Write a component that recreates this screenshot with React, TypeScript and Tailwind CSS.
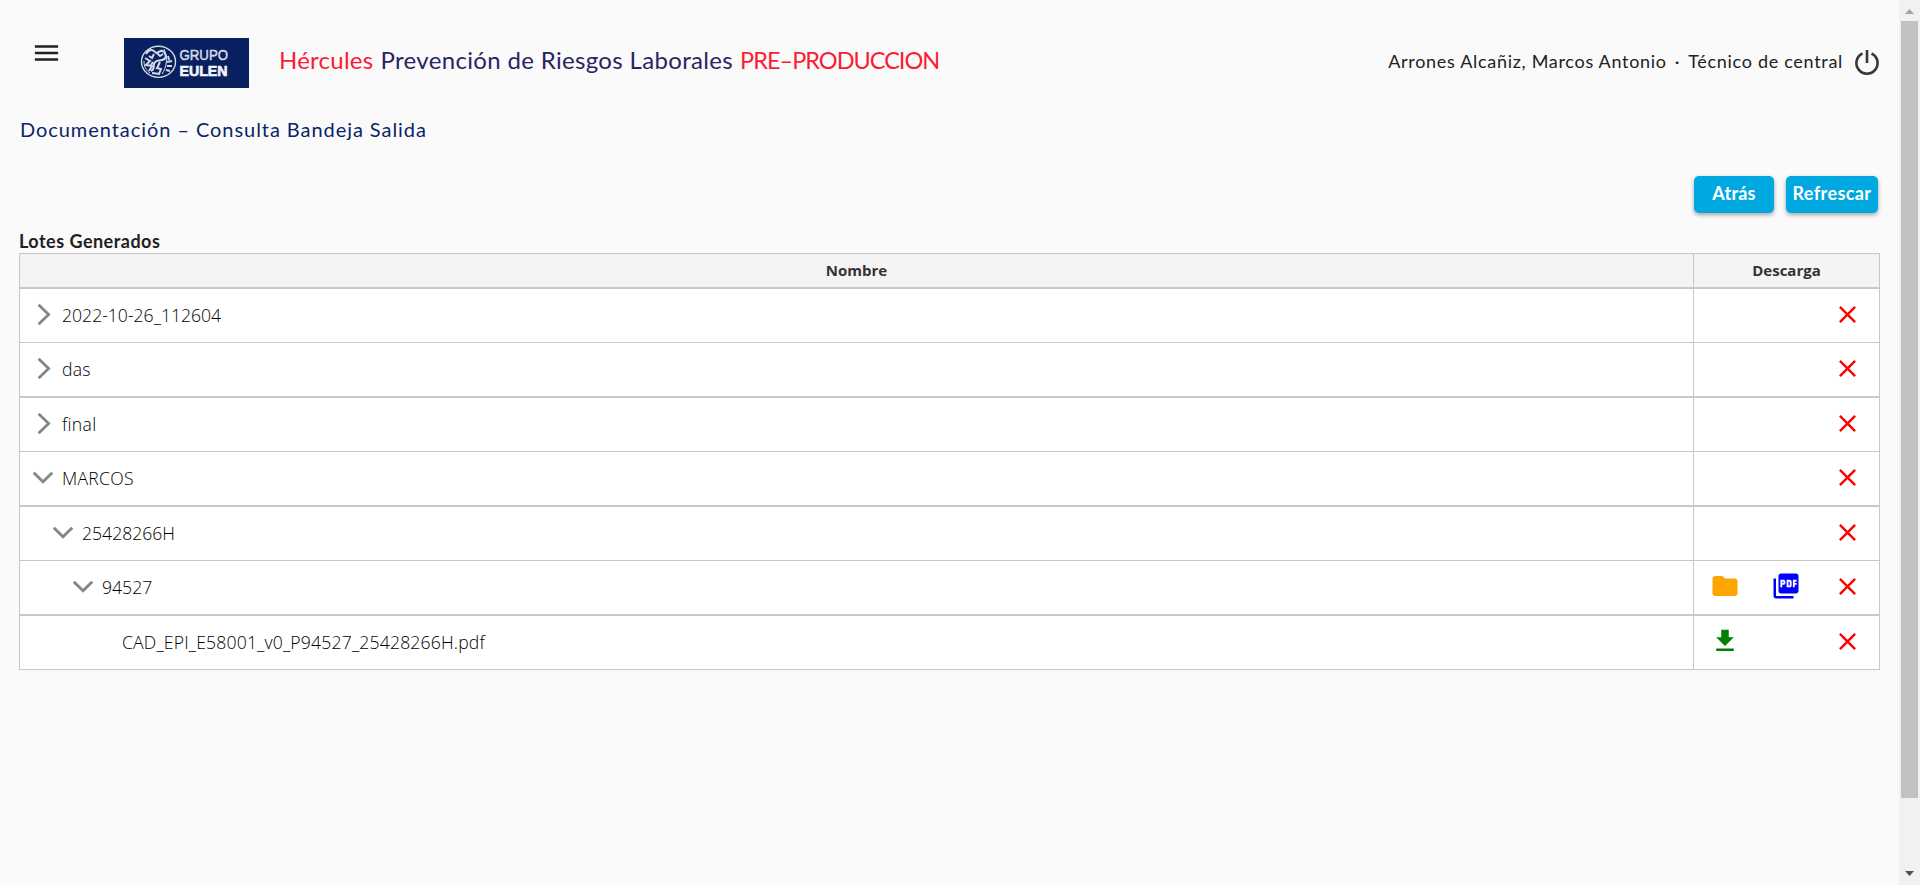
import { MdClose, MdFileDownload, MdFolder, MdMenu, MdPictureAsPdf } from "react-icons/md";

type Row = {
  name: string;
  indent: string;
  tracking?: string;
  state: "closed" | "open" | "leaf";
  folder?: boolean;
  pdf?: boolean;
  download?: boolean;
};

const rows: Row[] = [
  { name: "2022-10-26_112604", indent: "pl-[13px]", state: "closed" },
  { name: "das", indent: "pl-[13px]", tracking: "tracking-[0.2px]", state: "closed" },
  { name: "final", indent: "pl-[13px]", tracking: "tracking-[0.3px]", state: "closed" },
  { name: "MARCOS", indent: "pl-[13px]", tracking: "tracking-[0.3px]", state: "open" },
  { name: "25428266H", indent: "pl-[33px]", state: "open" },
  { name: "94527", indent: "pl-[53px]", state: "open", folder: true, pdf: true },
  { name: "CAD_EPI_E58001_v0_P94527_25428266H.pdf", indent: "pl-[73px]", tracking: "tracking-[0.17px]", state: "leaf", download: true },
];

function Chevron({ state }: { state: Row["state"] }) {
  return (
    <svg viewBox="0 0 20 53" className="h-[53px] w-5 shrink-0" fill="none" stroke="#868686" strokeWidth="2.8">
      {state === "closed" && <path d="M5.600 15.800 15.600 25.500 5.600 35.200" />}
      {state === "open" && <path d="M.8 20.800 10 29.800 19.200 20.800" />}
    </svg>
  );
}

function Logo() {
  return (
    <svg viewBox="0 0 125 50" className="h-[50px] w-[125px] shrink-0">
      <rect width="125" height="50" fill="#08205f" />
      <g fill="none" stroke="#d4d9e6">
        <ellipse cx="34.5" cy="23.8" rx="17" ry="15.6" strokeWidth="1.4" />
        <path strokeWidth="2" d="M22 16c3-5 7-5 9-2s6-4 9 0 2 7-2 8-7 0-8 4 1 5-3 7M21 20l5 3-4 4 6 1-3 5M25 18l3 2 2-4M33 15l3 3 3-2M36 24l-3 6 4 1-2 5M28 35l8 1M44 18l1 4M43 24l5-1M43 28l5 0M42 32l4 1M29 24l-2 3" />
        <path strokeWidth="1" d="M40 11c4 8 3 18-2 25M20 23c0 6 2 9 6 12" />
      </g>
      <g fontFamily="'Liberation Sans', sans-serif" fontSize="14">
        <text x="55.5" y="22.300" textLength="48.500" lengthAdjust="spacingAndGlyphs" fill="#d4d9e6" stroke="#d4d9e6" strokeWidth="0.5">GRUPO</text>
        <text x="55.5" y="37.500" textLength="48" lengthAdjust="spacingAndGlyphs" fill="#f4f5f9" stroke="#f4f5f9" strokeWidth="0.6" fontWeight="700">EULEN</text>
      </g>
    </svg>
  );
}

function PowerIcon() {
  return (
    <svg viewBox="0 0 26 28" className="h-7 w-[26px] shrink-0" fill="none" stroke="#38383c" strokeWidth="2.600">
      <path d="M13 1v13M8.500 4.500a10.600 10.600 0 1 0 9 0" />
    </svg>
  );
}

function Scrollbar() {
  return (
    <div className="flex w-[21px] shrink-0 flex-col items-center justify-between bg-[#f1f1f1]">
      <svg viewBox="0 0 21 21" className="h-[21px] w-[21px]" fill="#a3a3a3"><path d="M6 14h9L10.500 9z" /></svg>
      <div className="h-[777px] w-[17px] bg-[#c1c1c1]" />
      <div className="flex-1" />
      <svg viewBox="0 0 21 21" className="h-[21px] w-[21px]" fill="#505050"><path d="M6 7h9l-4.500 5z" /></svg>
    </div>
  );
}

export default function App() {
  return (
    <div className="flex h-[885px] w-full overflow-hidden bg-[#fafafa] font-['Lato',sans-serif] text-[#212121]">
      <main className="flex min-w-0 flex-1 flex-col pr-[19px] pl-[19px]">
        <header className="flex h-[113px] items-start pt-[38px]">
          <MdMenu className="-mt-px ml-[12px] h-[32px] w-[31px]" />
          <div className="ml-[62px]"><Logo /></div>
          <h1 className="ml-[30px] flex gap-[7px] pt-[4px] text-[24px] leading-9 whitespace-nowrap text-[#2a2464]">
            <span className="tracking-[0.25px] text-[#fb1c34]">Hércules</span>
            <span className="tracking-[0.34px]">Prevención de Riesgos Laborales</span>
            <span className="text-[23.500px] tracking-[-1px] text-[#fb1c34]">PRE–PRODUCCION</span>
          </h1>
          <div className="ml-auto flex items-start">
            <span className="mr-[11px] flex gap-2 pt-[9px] text-[18px] leading-7 tracking-[0.7px] whitespace-nowrap">
              <span>Arrones Alcañiz, Marcos Antonio</span>
              <span>·</span>
              <span>Técnico de central</span>
            </span>
            <div className="pt-[11px]"><PowerIcon /></div>
          </div>
        </header>
        <h2 className="h-[63px] pl-px text-[20px] leading-8 tracking-[0.94px] text-[#0a2467]">
          Documentación – Consulta Bandeja Salida
        </h2>
        <div className="flex h-[51px] justify-end gap-3 pr-[2px]">
          <button className="h-[37px] w-20 rounded-[5px] bg-[#00a8e1] pb-[2px] text-[18px] font-bold tracking-[0.2px] text-white shadow-[0_2px_4px_rgba(0,0,0,0.35)]">Atrás</button>
          <button className="h-[37px] w-[92px] rounded-[5px] bg-[#00a8e1] pb-[2px] text-[18px] font-bold tracking-[0.4px] text-white shadow-[0_2px_4px_rgba(0,0,0,0.35)]">Refrescar</button>
        </div>
        <h3 className="h-[26px] pt-px text-[18px] leading-[26px] font-bold tracking-[0.48px]">Lotes Generados</h3>
        <section className="border border-b-0 border-[#c8c8c8] bg-white font-['Open_Sans',sans-serif] text-black">
          <div className="flex h-[35px] border-b-2 border-[#c8c8c8] bg-[#f4f4f4] text-[15px] leading-[33px] font-bold text-[#333]">
            <div className="flex-1 text-center">Nombre</div>
            <div className="w-[186px] border-l border-[#c8c8c8] text-center">Descarga</div>
          </div>
          {rows.map((row) => (
            <div key={row.name} className="box-content flex h-[53px] border-b border-[#c8c8c8] odd:border-b-2 last:border-b">
              <div className={`flex flex-1 items-center ${row.indent}`}>
                <Chevron state={row.state} />
                <span className={`ml-[9px] text-[17.6px] font-light ${row.tracking ?? ""}`}>{row.name}</span>
              </div>
              <div className="grid w-[186px] grid-cols-3 items-center justify-items-center border-l border-[#c8c8c8] pb-[3px]">
                <div>
                  {row.folder && <MdFolder className="h-[30px] w-[30px] text-[#ffa500]" />}
                  {row.download && <MdFileDownload className="h-[30px] w-[30px] text-[#008000]" />}
                </div>
                <div>{row.pdf && <MdPictureAsPdf className="h-[30px] w-[30px] text-[#0000ff]" />}</div>
                <MdClose className="mr-[2px] h-[29px] w-[29px] text-[#ff0000]" />
              </div>
            </div>
          ))}
        </section>
      </main>
      <Scrollbar />
    </div>
  );
}
